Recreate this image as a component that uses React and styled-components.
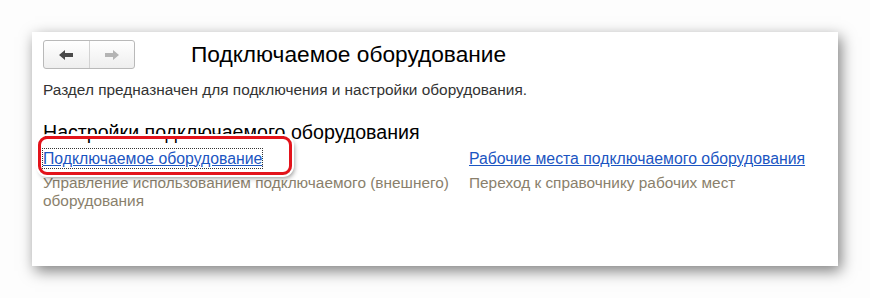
import React from "react";
import styled, { createGlobalStyle } from "styled-components";

const GlobalStyle = createGlobalStyle`
  body {
    margin: 0;
    background: #fdfdfd;
    font-family: "Liberation Sans", Arial, sans-serif;
  }
`;

const App = () => {
  return (
    <>
      <GlobalStyle />
      <Page>
        <Panel>
          <Header>
            <NavGroup>
              <NavBtn>
                <Arrow dir="back" active />
              </NavBtn>
              <NavBtn>
                <Arrow />
              </NavBtn>
            </NavGroup>
            <Title>Подключаемое оборудование</Title>
          </Header>
          <Intro>Раздел предназначен для подключения и настройки оборудования.</Intro>
          <SectionTitle>Настройки подключаемого оборудования</SectionTitle>
          <Columns>
            <Column>
              <LinkRow highlighted>
                <Link href="#" focused>
                  Подключаемое оборудование
                </Link>
              </LinkRow>
              <Hint>Управление использованием подключаемого (внешнего) оборудования</Hint>
            </Column>
            <Column>
              <LinkRow>
                <Link href="#">Рабочие места подключаемого оборудования</Link>
              </LinkRow>
              <Hint>Переход к справочнику рабочих мест</Hint>
            </Column>
          </Columns>
        </Panel>
      </Page>
    </>
  );
};

export default App;

const Arrow = ({ dir, active }) => (
  <svg width="16" height="12" viewBox="0 0 16 12">
    <path
      d={
        dir === "back"
          ? "M1 6 L7 1 L7 4 L15 4 L15 8 L7 8 L7 11 Z"
          : "M15 6 L9 1 L9 4 L1 4 L1 8 L9 8 L9 11 Z"
      }
      fill={active ? "#4a4a4a" : "#b4b4b4"}
    />
  </svg>
);

const Page = styled.div`
  padding: 32px;
`;

const Panel = styled.div`
  width: 806px;
  height: 234px;
  box-sizing: border-box;
  background: #fff;
  padding: 8px 11px 0 11px;
  box-shadow: 3px 5px 14px rgba(0, 0, 0, 0.5);
`;

const Header = styled.div`
  display: flex;
  align-items: center;
  height: 29px;
`;

const NavGroup = styled.div`
  display: flex;
  width: 92px;
  height: 29px;
  box-sizing: border-box;
  border: 1px solid #b9b9b9;
  border-radius: 3px;
  background: linear-gradient(#ffffff, #eeeeee);
  overflow: hidden;
`;

const NavBtn = styled.div`
  flex: 1;
  display: flex;
  align-items: center;
  justify-content: center;
  & + & {
    border-left: 1px solid #d2d2d2;
  }
`;

const Title = styled.h1`
  margin: 0 0 0 56px;
  font-size: 22.7px;
  font-weight: normal;
  color: #000;
  line-height: 29px;
`;

const Intro = styled.p`
  margin: 12px 0 0 0;
  font-size: 15.4px;
  line-height: 18px;
  color: #333;
`;

const SectionTitle = styled.h2`
  margin: 21px 0 0 0;
  font-size: 19.6px;
  font-weight: normal;
  line-height: 24px;
  color: #000;
`;

const Columns = styled.div`
  display: grid;
  grid-template-columns: 426px 1fr;
  margin-top: 3px;
`;

const Column = styled.div`
  display: flex;
  flex-direction: column;
`;

const LinkRow = styled.div`
  position: relative;
  height: 22px;
  display: flex;
  align-items: center;
  &::before {
    content: "";
    display: ${(p) => (p.highlighted ? "block" : "none")};
    position: absolute;
    left: -5px;
    top: -11px;
    width: 254px;
    height: 39px;
    box-sizing: border-box;
    border: 3px solid #e3131b;
    border-radius: 9px;
    box-shadow: 0 0 0 2px #fff, 2px 3px 5px rgba(0, 0, 0, 0.45);
  }
`;

const Link = styled.a`
  position: relative;
  font-size: 15.8px;
  line-height: 19px;
  color: #1b55c2;
  text-decoration: underline;
  outline: ${(p) => (p.focused ? "1px dotted #333" : "none")};
  outline-offset: 0;
`;

const Hint = styled.div`
  margin-top: 5px;
  font-size: 15.4px;
  line-height: 18px;
  color: #8a7f6c;
  max-width: 416px;
`;
